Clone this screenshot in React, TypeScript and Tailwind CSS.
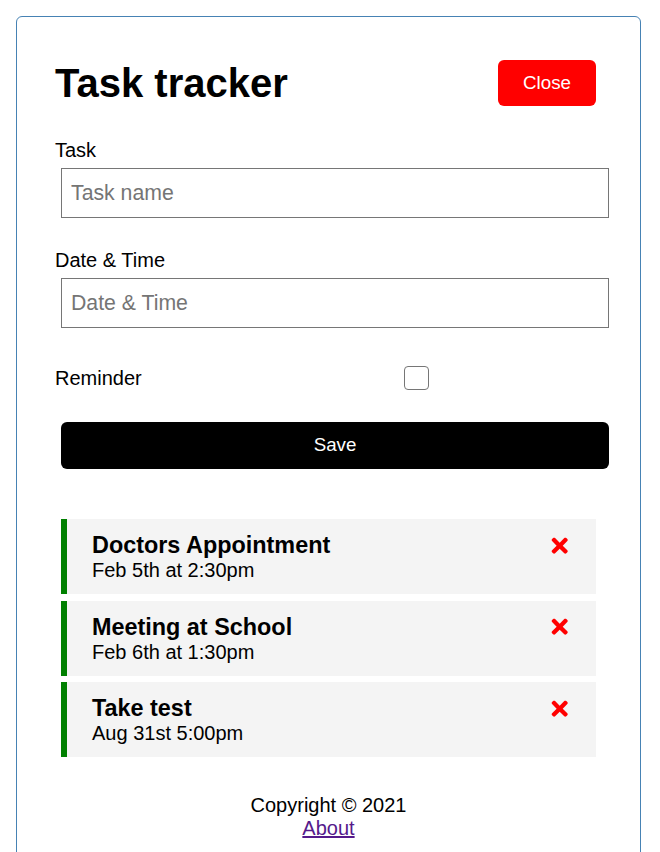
import { FaTimes } from "react-icons/fa";

const tasks = [
  { id: 1, text: "Doctors Appointment", day: "Feb 5th at 2:30pm" },
  { id: 2, text: "Meeting at School", day: "Feb 6th at 1:30pm" },
  { id: 3, text: "Take test", day: "Aug 31st 5:00pm" },
];

export default function App() {
  return (
    <div className="min-h-screen bg-white pt-[16px] font-['Liberation_Sans',Arial,sans-serif] text-[20px] text-black">
      <div className="ml-[16px] w-[625px] rounded-[6px] border border-[#4682b4] px-[38px] pb-[40px] pt-[43px]">
        <header className="flex h-[46px] items-center justify-between pr-[6px]">
          <h1 className="text-[40px] font-bold leading-none">Task tracker</h1>
          <button className="h-[46px] w-[98px] rounded-[6px] bg-[#ff0000] text-[18.75px] text-white">
            Close
          </button>
        </header>

        <form className="flex flex-col" onSubmit={(e) => e.preventDefault()}>
          <label className="mt-[33px] block h-[23px] leading-[23px]">Task</label>
          <input
            type="text"
            placeholder="Task name"
            className="ml-[6px] mt-[6px] h-[50px] w-[548px] border border-[#767676] px-[9px] text-[21.25px] outline-none placeholder:text-[#757575]"
          />

          <label className="mt-[31px] block h-[23px] leading-[23px]">Date &amp; Time</label>
          <input
            type="text"
            placeholder="Date & Time"
            className="ml-[6px] mt-[6px] h-[50px] w-[548px] border border-[#767676] px-[9px] text-[21.25px] outline-none placeholder:text-[#757575]"
          />

          <div className="mt-[38px] flex h-[24px] items-center">
            <label className="w-[349px] leading-[23px]">Reminder</label>
            <input
              type="checkbox"
              className="h-[24px] w-[25px] appearance-none rounded-[4px] border-[1.5px] border-[#767676] bg-white"
            />
          </div>

          <button
            type="submit"
            className="ml-[6px] mt-[32px] h-[47px] w-[548px] rounded-[6px] bg-black text-[18.75px] text-white"
          >
            Save
          </button>
        </form>

        <div className="mt-[50px] flex flex-col gap-[6.5px]">
          {tasks.map((t) => (
            <div
              key={t.id}
              className="mx-[6px] h-[75px] border-l-[6px] border-[#008000] bg-[#f4f4f4] px-[25px] pt-[13px]"
            >
              <h3 className="flex items-center justify-between text-[23.4px] font-bold leading-[27px]">
                {t.text}
                <FaTimes className="text-[#ff0000]" size="23.4px" />
              </h3>
              <p className="leading-[23px]">{t.day}</p>
            </div>
          ))}
        </div>

        <footer className="mt-[37px] text-center leading-[23px]">
          <p>Copyright &copy; 2021</p>
          <a href="#" className="text-[#551a8b] underline">
            About
          </a>
        </footer>
      </div>
    </div>
  );
}
